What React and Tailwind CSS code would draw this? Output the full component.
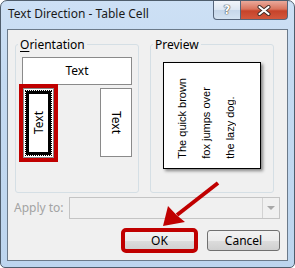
import React from 'react';

// Win7-style "Text Direction - Table Cell" dialog with annotation marks

const HelpButton = () => (
    <div className="flex h-[19px] w-[28px] items-center justify-center rounded-bl-[4px] border border-t-0 border-[#56657a] bg-[linear-gradient(180deg,#f1f5fa_0%,#dde7f2_48%,#c6d7ea_52%,#d4e3f2_100%)]">
        <span className="font-['DejaVu_Sans',sans-serif] text-[12px] font-bold leading-[12px] text-white [text-shadow:0_0_1px_#4a4a4a,0_0_1px_#4a4a4a,0_0_1px_#4a4a4a]">?</span>
    </div>
);

const CloseButton = () => (
    <div className="flex h-[19px] w-[47px] items-center justify-center rounded-br-[4px] border border-l-0 border-t-0 border-[#56657a] bg-[linear-gradient(180deg,#eaa99b_0%,#d9745d_45%,#c6432a_55%,#d2583d_100%)]">
        <svg width="14" height="11" viewBox="0 0 14 11">
            <path d="M2.5 2 L11.5 9 M11.5 2 L2.5 9" stroke="#3d2a26" strokeWidth="4" strokeLinecap="round" />
            <path d="M2.5 2 L11.5 9 M11.5 2 L2.5 9" stroke="#ffffff" strokeWidth="2.2" strokeLinecap="round" />
        </svg>
    </div>
);

const Arrow = () => (
    <svg className="pointer-events-none absolute left-0 top-0" width="295" height="268" viewBox="0 0 295 268">
        <line x1="218" y1="183" x2="177" y2="215" stroke="#c00000" strokeWidth="4" />
        <polygon points="163,226 168,206 176.5,215 185,222" fill="#c00000" />
    </svg>
);

const DialogButton = ({ children, marked }) => (
    <button
        type="button"
        className={
            marked
                ? 'h-[21px] w-[73px] rounded-[3px] border border-[#707070] bg-[linear-gradient(180deg,#f2f2f2_0%,#ebebeb_50%,#dddddd_50%,#cfcfcf_100%)] leading-[19px] outline-4 outline-offset-[-2px] outline-solid outline-[#c00000]'
                : 'h-[21px] w-[73px] rounded-[3px] border border-[#707070] bg-[linear-gradient(180deg,#f2f2f2_0%,#ebebeb_50%,#dddddd_50%,#cfcfcf_100%)] leading-[19px]'
        }
    >
        {children}
    </button>
);

export default function App() {
    return (
        <div className="relative h-[268px] w-[295px] bg-white">
            <div className="flex h-[268px] w-[295px] flex-col rounded-t-[7px] rounded-b-[5px] border border-[#4f5d6c] bg-[linear-gradient(180deg,#cde0f5_0%,#c4daf1_30%,#bdd5ee_100%)] font-['Noto_Sans',sans-serif] text-[12px] text-black">
                {/* Title bar */}
                <div className="flex h-[28px] items-start">
                    <div className="pl-[7px] pt-[5px] text-[12px] leading-[16px] text-[#1a1a1a]">Text Direction - Table Cell</div>
                    <div className="ml-auto mr-[6px] flex">
                        <HelpButton />
                        <CloseButton />
                    </div>
                </div>

                {/* Client area */}
                <div className="mx-[6px] flex h-[232px] flex-col border border-[#6b7a8a] bg-[#f0f0f0]">
                    <div className="flex gap-[11px] px-[7px] pt-[7px]">
                        {/* Orientation */}
                        <fieldset className="h-[156px] w-[124px] rounded-[3px] border border-[#d5dfe5] p-0">
                            <legend className="ml-[2px] px-[2px] leading-[15px]">
                                <span className="underline underline-offset-2">O</span>rientation
                            </legend>
                            <div className="pl-[6px] pr-[6px] pt-[5px]">
                                <div className="flex h-[28px] items-center justify-center border border-[#8a8a8a] bg-white">Text</div>
                                <div className="mt-[3px] flex items-start justify-between">
                                    <div className="ml-[1px] flex h-[70px] w-[31px] border border-[#8a8a8a] bg-white p-[1px] outline-4 outline-solid outline-[#c00000]">
                                        <div className="flex flex-1 border border-dotted border-black">
                                            <div className="flex flex-1 items-center justify-center border-[3px] border-black bg-white">
                                                <span className="rotate-180 [writing-mode:vertical-rl]">Text</span>
                                            </div>
                                        </div>
                                    </div>
                                    <div className="flex h-[69px] w-[32px] items-center justify-center border border-[#8a8a8a] bg-white">
                                        <span className="[writing-mode:vertical-rl]">Text</span>
                                    </div>
                                </div>
                            </div>
                        </fieldset>

                        {/* Preview */}
                        <fieldset className="h-[156px] w-[124px] rounded-[3px] border border-[#d5dfe5] p-0">
                            <legend className="ml-[2px] px-[2px] leading-[15px]">Preview</legend>
                            <div className="ml-[12px] mt-[10px] flex h-[107px] w-[98px] items-end border border-black bg-white pb-[9px] pl-[6px] shadow-[2px_2px_3px_rgba(0,0,0,0.45)]">
                                <div className="rotate-180 font-['Liberation_Sans',sans-serif] text-[11px] leading-[24px] [writing-mode:vertical-rl]">
                                    The quick brown<br />fox jumps over<br />the lazy dog.
                                </div>
                            </div>
                        </fieldset>
                    </div>

                    {/* Apply to */}
                    <div className="mt-[4px] flex h-[22px] items-center pl-[6px] pr-[7px]">
                        <span className="text-[#a3a3a3]">Apply to:</span>
                        <div className="ml-auto flex h-[22px] w-[211px] border border-[#c4c4c4]">
                            <div className="flex-1" />
                            <div className="flex w-[17px] items-center justify-center border-l border-[#d2d2d2]">
                                <div className="h-0 w-0 border-x-[4px] border-t-[4px] border-x-transparent border-t-[#a8a8a8]" />
                            </div>
                        </div>
                    </div>

                    {/* Buttons */}
                    <div className="mt-[11px] flex justify-end gap-[11px] pr-[7px]">
                        <DialogButton marked>OK</DialogButton>
                        <DialogButton>Cancel</DialogButton>
                    </div>
                </div>
            </div>
            <Arrow />
        </div>
    );
}
